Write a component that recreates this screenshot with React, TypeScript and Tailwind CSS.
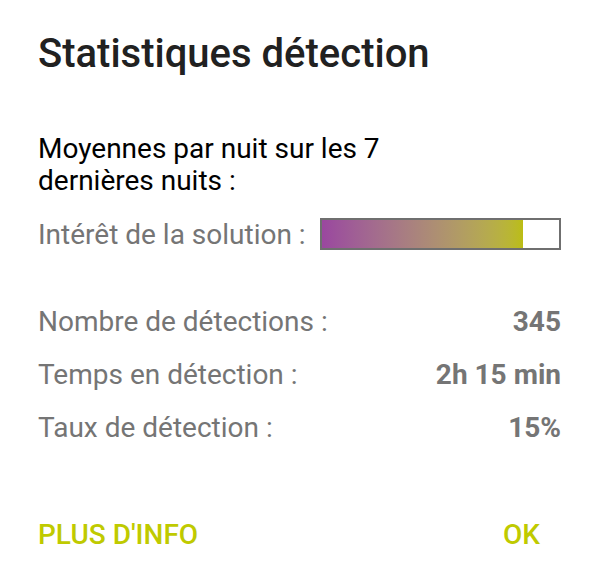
import React from 'react';

const stats = [
  { label: 'Nombre de détections :', value: '345' },
  { label: 'Temps en détection :', value: '2h 15 min' },
  { label: 'Taux de détection :', value: '15%' },
];

export default function App() {
  const interest = 85;

  return (
    <div
      className="w-[600px] h-[577px] bg-white pl-[38px] pr-[39px] pt-[30px] flex flex-col"
      style={{ fontFamily: 'Roboto, "Noto Sans", sans-serif' }}
    >
      <h1 className="text-[40px] leading-[48px] font-medium text-[#212121]">
        Statistiques détection
      </h1>

      <p className="mt-[55px] text-[28px] leading-[32px] text-black w-[360px]">
        Moyennes par nuit sur les 7 dernières nuits :
      </p>

      <div className="mt-[20px] flex items-center justify-between">
        <span className="text-[28px] leading-[32px] text-[#757575] pt-[2px]">Intérêt de la solution :</span>
        <div className="w-[241px] h-[32px] border-2 border-[#6f6f6f] bg-white">
          <div
            className="h-full bg-gradient-to-r from-[#9a479f] to-[#bbbd12]"
            style={{ width: `${interest}%` }}
          />
        </div>
      </div>

      <div className="mt-[55px] flex flex-col gap-[21px]">
        {stats.map((s) => (
          <div key={s.label} className="flex items-center justify-between text-[28px] leading-[32px] text-[#757575]">
            <span>{s.label}</span>
            <span className="font-bold">{s.value}</span>
          </div>
        ))}
      </div>

      <div className="mt-auto mb-[26px] flex items-center justify-between pr-[21px]">
        <button className="text-[28px] leading-[32px] font-medium text-[#bfca00]">PLUS D'INFO</button>
        <button className="text-[28px] leading-[32px] font-medium text-[#bfca00]">OK</button>
      </div>
    </div>
  );
}
